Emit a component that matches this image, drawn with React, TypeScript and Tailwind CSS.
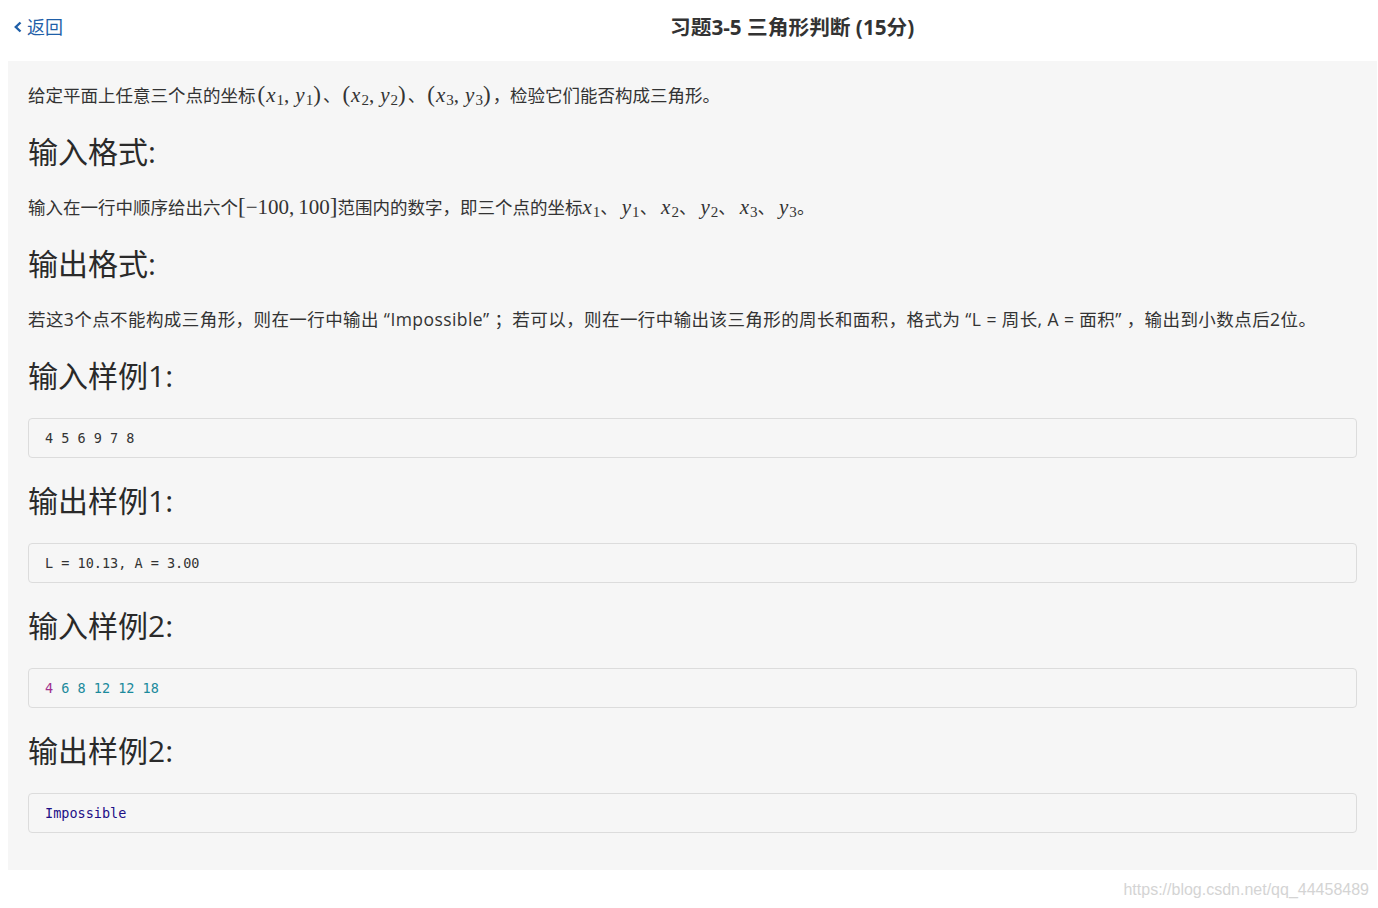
import React from "react";

const V = ({ v, s }: { v: string; s?: string }) => (
  <span>
    <span className="italic">{v}</span>
    {s && <span className="text-[0.72em] relative top-[0.22em] ml-[1px]">{s}</span>}
  </span>
);

const Pt = ({ n }: { n: string }) => (
  <span className="font-['Liberation_Serif',serif] text-[21px] leading-[0] text-[#333] mx-[2px]">
    <span className="text-[23px] font-light mr-[1px]">(</span>
    <V v="x" s={n} />
    <span className="mr-[6px]">,</span>
    <V v="y" s={n} />
    <span className="text-[23px] font-light">)</span>
  </span>
);

const M = ({ children }: { children: React.ReactNode }) => (
  <span className="font-['Liberation_Serif',serif] text-[21px] leading-[0]">{children}</span>
);

const H = ({ children }: { children: React.ReactNode }) => (
  <h3 className="text-[30px] leading-[40px] text-[#2a2a2a] mt-[21px] mb-[19px] font-['Open_Sans','Noto_Sans_CJK_SC',sans-serif]">
    {children}
  </h3>
);

const Code = ({ children }: { children: React.ReactNode }) => (
  <div className="mt-[3px] mb-[2px] border border-[#dcdcdc] rounded-[4px] h-[40px] flex items-center pl-[16px] font-['DejaVu_Sans_Mono',monospace] text-[13.5px] text-[#333]">
    {children}
  </div>
);

export default function App() {
  return (
    <div className="w-[1378px] h-[908px] bg-white font-['Open_Sans','Noto_Sans_CJK_SC',sans-serif] text-[#333] relative">
      <div className="h-[61px] flex items-center relative">
        <div className="flex items-center pl-[13px] text-[#1f5fa8] text-[18px] gap-[4px] relative top-[-4px]">
          <svg width="10" height="12" viewBox="0 0 10 12">
            <path d="M7.5 1.5 L2.8 6 L7.5 10.5" fill="none" stroke="#1f5fa8" strokeWidth="2.4" />
          </svg>
          <span className="font-['Noto_Sans_CJK_SC',sans-serif]">返回</span>
        </div>
        <div className="absolute left-[670px] top-[12px] text-[20.7px] font-bold text-[#333] font-['Open_Sans','Noto_Sans_CJK_SC',sans-serif]">
          习题3-5 三角形判断 (15分)
        </div>
      </div>
      <div className="ml-[8px] mr-[1px] bg-[#f6f6f6] px-[20px] pt-[18px] h-[809px] flex flex-col">
        <p className="text-[17.5px] leading-[32px] font-['Noto_Sans_CJK_SC',sans-serif] whitespace-nowrap">
          给定平面上任意三个点的坐标<Pt n="1" />、<Pt n="2" />、<Pt n="3" />，检验它们能否构成三角形。
        </p>
        <H>输入格式:</H>
        <p className="text-[17.5px] leading-[32px] font-['Noto_Sans_CJK_SC',sans-serif] whitespace-nowrap">
          输入在一行中顺序给出六个
          <M>
            <span className="text-[23px] font-light">[</span>−100,<span className="ml-[4px]">100</span>
            <span className="text-[23px] font-light">]</span>
          </M>
          范围内的数字，即三个点的坐标
          <M><V v="x" s="1" /></M>、 <M><V v="y" s="1" /></M>、 <M><V v="x" s="2" /></M>、 <M><V v="y" s="2" /></M>、 <M><V v="x" s="3" /></M>、 <M><V v="y" s="3" /></M>。
        </p>
        <H>输出格式:</H>
        <p className="text-[17.5px] leading-[32px] font-['Open_Sans','Noto_Sans_CJK_SC',sans-serif] tracking-[0.42px] whitespace-nowrap">
          若这3个点不能构成三角形，则在一行中输出 “Impossible” ；若可以，则在一行中输出该三角形的周长和面积，格式为 “L = 周长, A = 面积” ，输出到小数点后2位。
        </p>
        <H>输入样例1:</H>
        <Code>4 5 6 9 7 8</Code>
        <H>输出样例1:</H>
        <Code>L = 10.13, A = 3.00</Code>
        <H>输入样例2:</H>
        <Code>
          <span className="text-[#a0308f]">4</span>
          <span className="text-[#1b8a9c] whitespace-pre"> 6 8 12 12 18</span>
        </Code>
        <H>输出样例2:</H>
        <Code>
          <span className="text-[#1d0f86]">Impossible</span>
        </Code>
      </div>
      <div className="absolute right-[9px] bottom-[6px] text-[16px] text-[#d4d4d4] font-['Liberation_Sans',sans-serif]">
        https://blog.csdn.net/qq_44458489
      </div>
    </div>
  );
}
